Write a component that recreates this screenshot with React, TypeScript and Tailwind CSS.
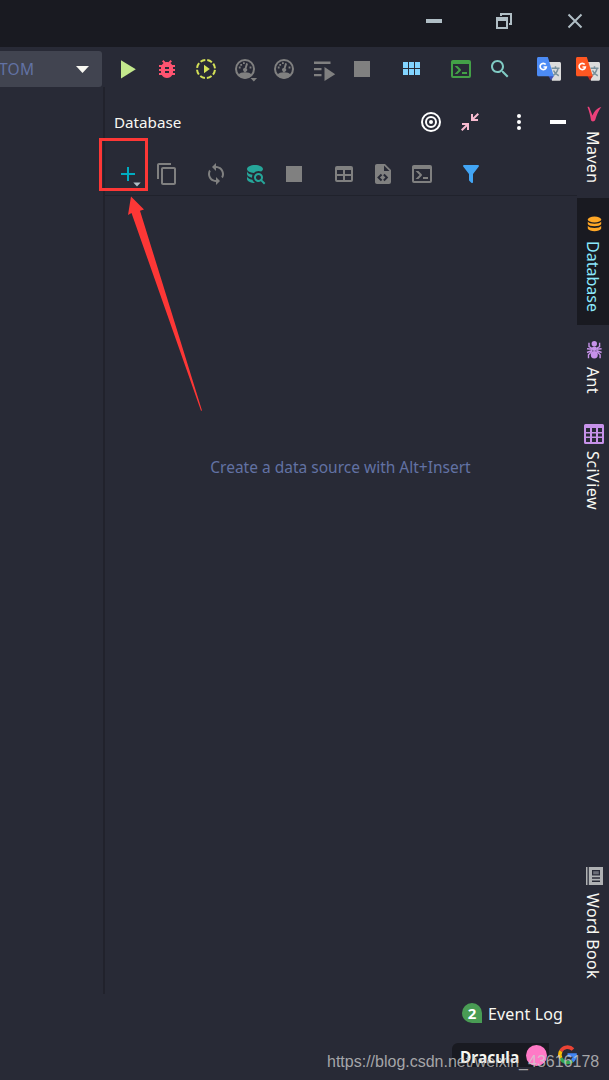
import type { ReactNode } from "react";
import clsx from "clsx";

const PATHS = {
  play: "M5 3.2v18.2L19.8 12.2z",
  bug: "M20 8h-2.81c-.45-.78-1.07-1.45-1.82-1.96L17 4.41 15.59 3l-2.17 2.17C12.96 5.06 12.49 5 12 5c-.49 0-.96.06-1.41.17L8.41 3 7 4.41l1.62 1.63C7.88 6.55 7.26 7.22 6.81 8H4v2h2.09c-.05.33-.09.66-.09 1v1H4v2h2v1c0 .34.04.67.09 1H4v2h2.81c1.04 1.79 2.97 3 5.19 3s4.15-1.21 5.19-3H20v-2h-2.09c.05-.33.09-.66.09-1v-1h2v-2h-2v-1c0-.34-.04-.67-.09-1H20V8zm-6 8h-4v-2h4v2zm0-4h-4v-2h4v2z",
  runList: "M3 4.5h16.5V7H3zM3 11h7.5v2.2H3zM3 17h7.5v2.2H3zM13.5 10v14L24.2 17.2z",
  stop: "M4 4h16v16H4z",
  modules:
    "M4 11h5V5H4v6zm0 7h5v-6H4v6zm6 0h5v-6h-5v6zm6 0h5v-6h-5v6zm-6-7h5V5h-5v6zm6-6v6h5V5h-5z",
  console:
    "M20,19V7H4V19H20M20,3A2,2 0 0,1 22,5V19A2,2 0 0,1 20,21H4A2,2 0 0,1 2,19V5C2,3.89 2.9,3 4,3H20M13,17V15H18V17H13M9.58,13L5.57,9H8.4L11.7,12.3C12.09,12.69 12.09,13.33 11.7,13.72L8.42,17H5.59L9.58,13Z",
  search:
    "M15.5 14h-.79l-.28-.27C15.41 12.59 16 11.11 16 9.5 16 5.91 13.09 3 9.5 3S3 5.91 3 9.5 5.91 16 9.5 16c1.61 0 3.09-.59 4.23-1.57l.27.28v.79l5 4.99L20.49 19l-4.99-5zm-6 0C7.01 14 5 11.99 5 9.5S7.01 5 9.5 5 14 7.01 14 9.5 11.99 14 9.5 14z",
  add: "M19 13h-6v6h-2v-6H5v-2h6V5h2v6h6z",
  copy: "M16 1H4c-1.1 0-2 .9-2 2v14h2V3h12V1zm3 4H8c-1.1 0-2 .9-2 2v14c0 1.1.9 2 2 2h11c1.1 0 2-.9 2-2V7c0-1.1-.9-2-2-2zm0 16H8V7h11v14z",
  sync: "M12 4V1L8 5l4 4V6c3.31 0 6 2.69 6 6 0 1.01-.25 1.97-.7 2.8l1.46 1.46C19.54 15.03 20 13.57 20 12c0-4.42-3.58-8-8-8zm0 14c-3.31 0-6-2.69-6-6 0-1.01.25-1.97.7-2.8L5.24 7.74C4.46 8.97 4 10.43 4 12c0 4.42 3.58 8 8 8v3l4-4-4-4v3z",
  dbSearch:
    "M18.68,12.32C16.92,10.56 14.07,10.57 12.32,12.33C10.56,14.09 10.56,16.94 12.32,18.69C13.81,20.17 16.11,20.43 17.89,19.32L21,22.39L22.39,21L19.3,17.89C20.43,16.12 20.17,13.8 18.68,12.32M17.27,17.27C16.29,18.25 14.71,18.24 13.73,17.27C12.76,16.29 12.76,14.71 13.74,13.73C14.71,12.76 16.29,12.76 17.27,13.73C18.24,14.71 18.24,16.29 17.27,17.27M10.9,20.1C10.25,19.44 9.74,18.65 9.42,17.78C6.27,17.25 4,15.76 4,14V17C4,19.21 7.58,21 12,21V21C11.6,20.74 11.23,20.44 10.9,20.1M4,9V12C4,13.68 6.07,15.12 9,15.7C9,15.63 9,15.57 9,15.5C9,14.57 9.2,13.65 9.58,12.81C6.34,12.3 4,10.79 4,9M12,3C7.58,3 4,4.79 4,7C4,9 7,10.68 10.85,11H10.9C12.1,9.74 13.76,9 15.5,9C16.41,9 17.31,9.19 18.14,9.56C19.17,9.09 19.87,8.12 20,7C20,4.79 16.42,3 12,3Z",
  table:
    "M5,4H19A2,2 0 0,1 21,6V18A2,2 0 0,1 19,20H5A2,2 0 0,1 3,18V6A2,2 0 0,1 5,4M5,8V12H11V8H5M13,8V12H19V8H13M5,14V18H11V14H5M13,14V18H19V14H13Z",
  fileCode:
    "M13,9H18.5L13,3.5V9M6,2H14L20,8V20A2,2 0 0,1 18,22H6C4.89,22 4,21.1 4,20V4C4,2.89 4.89,2 6,2M6.12,15.5L9.86,19.24L11.28,17.83L8.95,15.5L11.28,13.17L9.86,11.76L6.12,15.5M17.28,15.5L13.54,11.76L12.12,13.17L14.45,15.5L12.12,17.83L13.54,19.24L17.28,15.5Z",
  filter:
    "M14,12V19.88C14.04,20.18 13.94,20.5 13.71,20.71C13.32,21.1 12.69,21.1 12.3,20.71L10.29,18.7C10.06,18.47 9.96,18.16 10,17.87V12H9.97L4.21,4.62C3.87,4.19 3.95,3.56 4.38,3.22C4.57,3.08 4.78,3 5,3V3H19V3C19.22,3 19.43,3.08 19.62,3.22C20.05,3.56 20.13,4.19 19.79,4.62L14.03,12H14Z",
  minus: "M4 10h16v4H4z",
  restore: "M4 8h12v12H4zM6 12v6h8v-6zM8 4h12v12h-3v-2h1V6h-8v1H8z",
  collapse:
    "M19.6 3L21 4.4l-4.6 4.6H20v2h-7V4h2v3.6zM4 13h7v7H9v-3.6L4.4 21 3 19.6 7.6 15H4z",
};

type IconProps = {
  name?: keyof typeof PATHS;
  className?: string;
  children?: ReactNode;
};

function Icon({ name, className, children }: IconProps) {
  return (
    <svg
      viewBox="0 0 24 24"
      fill="currentColor"
      fillRule="evenodd"
      className={clsx("size-6 shrink-0 overflow-visible", className)}
    >
      {name && <path d={PATHS[name]} />}
      {children}
    </svg>
  );
}

function Gauge({ menu = false }: { menu?: boolean }) {
  return (
    <Icon className="text-[#808080]">
      <circle cx="12" cy="12" r="9" fill="none" stroke="currentColor" strokeWidth="2" />
      <path d="M5 18c1.6-2 4-2.7 7-2.7s5.4.7 7 2.7c-1.7 2.2-4.2 3.5-7 3.5S6.7 20.2 5 18z" />
      <path d="M13.2 6l1.8.7-1.5 4.8a2 2 0 1 1-1.8-.5z" />
      <path d="M10 5.3h1.8v1.8H10zM7.3 7h1.8v1.8H7.3zM5.8 9.6h1.8v1.8H5.8zM16.6 9.6h1.8v1.8h-1.8z" />
      {menu && <path d="M17.5 21h6.6l-3.3 3.4z" />}
    </Icon>
  );
}

function Translate({ front, fold }: { front: string; fold: string }) {
  return (
    <Icon>
      <path d="M10 5h12.5c.9 0 1.5.6 1.5 1.5v15.7c0 .9-.6 1.5-1.5 1.5H15z" fill="#dcdcdc" />
      <path
        d="M14.5 11.3h8M18.5 9.3v2M21 11.5c-.6 3-2.6 5.500-5 7M16.5 13.5c1.2 2.600 3 4.300 5.3 5.300"
        fill="none"
        stroke="#78909c"
        strokeWidth="1.5"
      />
      <path d="M11.5 19h5.3L14 23.5z" fill={fold} />
      <path d="M1.5 0h9.3L16.8 19.3H1.5C.6 19.3 0 18.7 0 17.8V1.5C0 .6.6 0 1.5 0z" fill={front} />
      <path
        d="M8.7 7.6A3.1 3.1 0 1 0 9.3 10H6.5"
        fill="none"
        stroke="#fff"
        strokeWidth="1.7"
      />
    </Icon>
  );
}

function TitleBar() {
  return (
    <header className="flex h-[47px] shrink-0 items-center justify-end gap-[46px] bg-[#191a21] pr-[22px] pb-[5px] text-[#b0bec5]">
      <Icon name="minus" />
      <Icon name="restore" />
      <Icon className="ml-px">
        <path d="M5.5 5.5l13 13M18.5 5.5l-13 13" fill="none" stroke="currentColor" strokeWidth="2" />
      </Icon>
    </header>
  );
}

function MainToolbar() {
  return (
    <div className="flex h-10 shrink-0 items-center pt-1">
      <div className="flex h-9 w-[102px] items-center justify-between rounded-r-[3px] bg-[#414450] pr-[13px] text-[#6272a4]">
        <span className="-ml-px pt-[2px] text-[15.5px] tracking-[0.3px]">TOM</span>
        <svg viewBox="0 0 13 7" className="h-[7px] w-[13px] text-[#f8f8f2]" fill="currentColor">
          <path d="M0 0h13L6.5 7z" />
        </svg>
      </div>
      <div className="ml-[14px] flex gap-[15px] text-[#808080]">
        <Icon name="play" className="text-[#c3e88d]" />
        <Icon name="bug" className="text-[#ff5370]" />
        <Icon className="text-[#d4e157]">
          <circle
            cx="12"
            cy="12"
            r="9"
            fill="none"
            stroke="currentColor"
            strokeWidth="2"
            strokeDasharray="5.07 2"
            strokeDashoffset="-1"
          />
          <path d="M10 7.8v8.4l5.8-4.2z" />
        </Icon>
        <Gauge menu />
        <Gauge />
        <Icon name="runList" />
        <Icon name="stop" />
      </div>
      <Icon name="modules" className="ml-[25px] text-[#82d4ff]" />
      <div className="ml-[26px] flex gap-[15px]">
        <Icon name="console" className="text-[#43a047]" />
        <Icon name="search" className="text-[#80cbc4]" />
      </div>
      <div className="ml-[25px] flex gap-[15px]">
        <Translate front="#4c8bf5" fold="#3f51b5" />
        <Translate front="#ff5722" fold="#c6281c" />
      </div>
    </div>
  );
}

function PanelHeader() {
  return (
    <div className="flex h-[70px] items-center pr-[7px] pl-[9px]">
      <h2 className="flex-1 text-[15.2px] text-[#f8f8f2]">Database</h2>
      <Icon className="text-white">
        <circle cx="12" cy="12" r="9" fill="none" stroke="currentColor" strokeWidth="2" />
        <circle cx="12" cy="12" r="5" fill="none" stroke="currentColor" strokeWidth="2" />
        <circle cx="12" cy="12" r="2" />
      </Icon>
      <Icon name="collapse" className="ml-[15px] text-[#f8bbd0]" />
      <Icon className="ml-[25px] text-white">
        <circle cx="12" cy="6" r="2" />
        <circle cx="12" cy="12" r="2" />
        <circle cx="12" cy="18" r="2" />
      </Icon>
      <Icon name="minus" className="ml-[15px] text-white" />
    </div>
  );
}

function PanelToolbar() {
  return (
    <div className="flex h-[39px] items-start border-b border-[#20222c] pt-[5px] pl-[11px] text-[#808080]">
      <div className="flex gap-[15px]">
        <Icon name="add" className="text-[#00acc1]">
          <path d="M17.3 20.5h7.4L21 24.4z" className="fill-[#b0bec5]" />
        </Icon>
        <Icon name="copy" />
      </div>
      <div className="ml-[25px] flex gap-[15px]">
        <Icon name="sync" />
        <Icon name="dbSearch" className="text-[#26a69a]" />
        <Icon name="stop" />
      </div>
      <div className="ml-[26px] flex gap-[15px]">
        <Icon name="table" />
        <Icon name="fileCode" />
        <Icon name="console" />
      </div>
      <Icon name="filter" className="ml-[25px] text-[#42a5f5]" />
    </div>
  );
}

type StripeTabProps = {
  label: string;
  icon: ReactNode;
  active?: boolean;
  className?: string;
};

function StripeTab({ label, icon, active = false, className }: StripeTabProps) {
  return (
    <div
      className={clsx(
        "flex w-8 flex-col items-center gap-[5px] leading-8",
        active ? "bg-[#191a21] text-[#8be9fd]" : "text-[#f8f8f2]",
        className
      )}
    >
      <span className="ml-[2px] flex">{icon}</span>
      <span className="[writing-mode:vertical-rl] whitespace-nowrap">{label}</span>
    </div>
  );
}

function RightStripe() {
  return (
    <nav className="flex w-8 shrink-0 flex-col">
      <StripeTab
        label="Maven"
        className="h-[111px] pt-[15px] text-base tracking-[0.4px]"
        icon={
          <Icon className="text-[#ec407a]">
            <path d="M5.500 5c.8-.4 1.800 0 2.100 1l2.900 7.500C12 10 14.700 6 19.300 5c-3 4-4.800 8.300-6 12.800-.8 2.200-4 2.200-4.400 0C8.300 13.500 7 9 5.500 5z" />
          </Icon>
        }
      />
      <StripeTab
        label="Database"
        active
        className="h-[127px] pt-[14px] text-base"
        icon={
          <Icon className="text-[#ffa726]">
            <ellipse cx="12.5" cy="7.5" rx="6.7" ry="3" />
            <path d="M5.8 9.5c1.5 3 11.9 3 13.4 0v2.6c-1 3-12.4 3-13.4 0zM5.8 13.8c1.5 3 11.9 3 13.4 0v2.7c-1.5 3.6-11.9 3.6-13.4 0z" />
          </Icon>
        }
      />
      <StripeTab
        label="Ant"
        className="h-[97px] pt-[13px] text-base tracking-[0.3px]"
        icon={
          <Icon className="text-[#c792ea]">
            <circle cx="12.3" cy="5.8" r="2.7" />
            <ellipse cx="12.3" cy="10.8" rx="2.5" ry="2.2" />
            <ellipse cx="12.3" cy="16.8" rx="3.5" ry="3.8" />
            <path
              d="M10.3 10.5L7 8.5V4.8M14.3 10.5l3.3-2V4.8M10.3 11.3L5 10.8M14.3 11.3l5.3-.5M10.3 12.3L5 14.5M14.3 12.3l5.3 2.2M10 13.3l-3.5 3.5v3.5M14.6 13.3l3.5 3.5v3.5"
              fill="none"
              stroke="currentColor"
              strokeWidth="1.4"
            />
          </Icon>
        }
      />
      <StripeTab
        label="SciView"
        className="h-[200px] text-base tracking-[0.5px]"
        icon={
          <Icon className="text-[#c792ea]">
            <path d="M3.5 2h17A1.5 1.5 0 0 1 22 3.5v17a1.5 1.5 0 0 1-1.5 1.5h-17A1.5 1.5 0 0 1 2 20.5v-17A1.5 1.5 0 0 1 3.5 2zM4 6v4h4V6zM10 6v4h4V6zM16 6v4h4V6zM4 11.5v3h4v-3zM10 11.5v3h4v-3zM16 11.5v3h4v-3zM4 16v4h4v-4zM10 16v4h4v-4zM16 16v4h4v-4z" />
          </Icon>
        }
      />
      <StripeTab
        label="Word Book"
        className="mt-auto mb-px h-[129px] text-base tracking-[0.35px]"
        icon={
          <Icon className="text-[#afb1b3]">
            <path d="M4 3h1.5v18H4zM6.8 3H21v18H6.8zM10 6v5.5h8V6zM10 13.2v1.5h8v-1.5zM10 16.5V18h8v-1.5z" />
            <path d="M11.2 7.2h5.6v3.1h-5.6z" className="fill-[#6c6e78]" />
          </Icon>
        }
      />
    </nav>
  );
}

function StatusBar() {
  return (
    <footer className="flex h-[86px] shrink-0 flex-col items-end">
      <div className="mt-[7px] mr-[46px] flex h-6 items-center gap-[6px]">
        <span className="flex size-5 items-center justify-center rounded-full rounded-br-none bg-[#499c54] text-[15px] leading-none font-bold text-white">
          2
        </span>
        <span className="pt-[2px] text-base tracking-[0.13px] text-[#f8f8f2]">Event Log</span>
      </div>
      <div className="mt-[18px] mr-[29px] flex items-center gap-[7px]">
        <div className="flex h-6 w-[97px] items-center justify-between rounded-tl-md bg-[#191a21] pr-[2px] pl-2">
          <span className="pt-[5px] text-[15.5px] leading-none font-bold text-[#f8f8f2]">Dracula</span>
          <span className="size-[21px] shrink-0 rounded-full bg-[#ff79c6]" />
        </div>
        <Icon>
          <g fill="none" strokeWidth="3.6">
            <path d="M4.8 8.2A7.6 7.6 0 0 1 17 6.5" stroke="#ea4335" />
            <path d="M4.8 8.2A7.6 7.6 0 0 0 4.8 15.2" stroke="#fbbc05" />
            <path d="M4.8 15.2A7.6 7.6 0 0 0 16.3 17.8" stroke="#34a853" />
            <path d="M16.3 17.8A7.6 7.6 0 0 0 19 12H11.5" stroke="#4285f4" />
          </g>
        </Icon>
      </div>
    </footer>
  );
}

export default function App() {
  return (
    <div className="relative flex h-[1080px] w-[609px] flex-col overflow-hidden bg-[#282a36] font-['Noto_Sans','Open_Sans',sans-serif]">
      <TitleBar />
      <MainToolbar />
      <div className="flex min-h-0 flex-1">
        <div className="w-[103px] shrink-0" />
        <section className="flex flex-1 flex-col border-l-2 border-[#21222c]">
          <PanelHeader />
          <PanelToolbar />
          <div className="flex flex-1 justify-center pt-[259px] text-[15.5px] text-[#6272a4]">
            <p className="mr-px h-6 leading-6 whitespace-nowrap">Create a data source with Alt+Insert</p>
          </div>
        </section>
        <RightStripe />
      </div>
      <StatusBar />

      {/* Callout on the add button */}
      <div className="absolute top-[138px] left-[99px] h-[53px] w-[49px] border-3 border-[#fd3736]" />
      <svg
        viewBox="0 0 90 220"
        className="absolute top-[194px] left-[124px] h-[220px] w-[90px] fill-[#fd3736]"
      >
        <path d="M7 2.5L20 15.5l-4 1.3L78 216.5l-1 .3L7.5 19 4 21z" />
      </svg>
      <p className="absolute top-[1050px] left-[327px] font-['Liberation_Sans',sans-serif] text-base whitespace-nowrap text-[#d0d0d0]/75">
        https://blog.csdn.net/weixin_43616178
      </p>
    </div>
  );
}
